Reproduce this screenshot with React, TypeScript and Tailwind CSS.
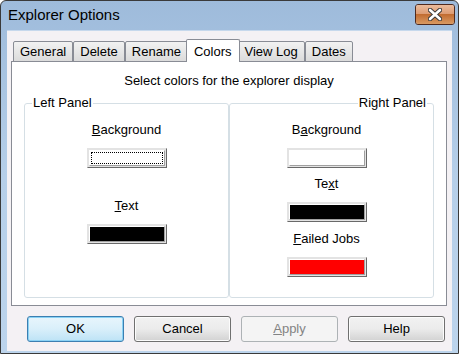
import React from "react";

const F = { fontFamily: '"Liberation Sans", Arial, sans-serif' } as const;

function ColorBtn({ color, focus }: { color: string; focus?: boolean }) {
  return (
    <div className="w-[80px] h-[20px] border border-t-[#e3e3e3] border-l-[#e3e3e3] border-r-[#696969] border-b-[#696969] bg-[#e3e3e3] p-[1px]">
      <div className="w-full h-full border border-t-white border-l-white border-r-[#a0a0a0] border-b-[#a0a0a0] p-[1px]" style={{ background: color }}>
        {focus && <div className="w-full h-full border border-dotted border-black" />}
      </div>
    </div>
  );
}

function Tab({ label, selected }: { label: string; selected?: boolean }) {
  if (selected) {
    return (
      <div className="relative z-10 h-[23px] -mx-[2px] px-[7px] bg-white border border-[#898c95] border-b-0 rounded-t-[2px] flex items-start pt-[2px] text-[13px] text-black">
        {label}
      </div>
    );
  }
  return (
    <div className="h-[21px] px-[6px] border border-[#898c95] rounded-t-[2px] bg-gradient-to-b from-[#f2f2f2] to-[#dbdbdb] flex items-center text-[13px] text-black">
      {label}
    </div>
  );
}

function Btn({ children, kind }: { children: React.ReactNode; kind?: "default" | "disabled" }) {
  const base = "w-[97px] h-[26px] rounded-[3px] border flex items-center justify-center text-[13px]";
  if (kind === "default")
    return (
      <div className={`${base} border-[#3c7fb1] bg-gradient-to-b from-[#e8f5fc] via-[#d9effa] to-[#bde3f6] text-black shadow-[inset_0_0_0_1px_#8ad2f5]`}>
        {children}
      </div>
    );
  if (kind === "disabled")
    return <div className={`${base} border-[#adb2b5] bg-[#f4f4f4] text-[#838383]`}>{children}</div>;
  return (
    <div className={`${base} border-[#707070] bg-gradient-to-b from-[#f2f2f2] via-[#ebebeb] to-[#d2d2d2] text-black shadow-[inset_0_0_0_1px_#fcfcfc]`}>
      {children}
    </div>
  );
}

export default function App() {
  return (
    <div style={F} className="w-[459px] h-[354px] border border-[#3a3a3a] rounded-t-[6px] bg-gradient-to-b from-[#9ebbdb] via-[#b6cfe9] to-[#bcd4ec] flex flex-col overflow-hidden">
      <div className="h-[29px] flex items-center pl-[7px] pr-[3px] shrink-0">
        <span className="text-[15px] text-black">Explorer Options</span>
        <div className="relative ml-auto mt-[-3px] w-[40px] h-[21px] rounded-[3px] border border-[#4f2a1e] overflow-hidden flex flex-col">
          <div className="h-1/2 bg-gradient-to-b from-[#ebbc9c] to-[#dc9b73]" />
          <div className="h-1/2 bg-gradient-to-b from-[#c06a2e] to-[#d99a62]" />
          <svg className="absolute left-[12px] top-[3px]" width="14" height="13" viewBox="0 0 14 13">
            <path d="M2 2 L12 11 M12 2 L2 11" stroke="#3a3a3a" strokeWidth="4.5" strokeLinecap="round" />
            <path d="M2 2 L12 11 M12 2 L2 11" stroke="#ffffff" strokeWidth="2.6" strokeLinecap="round" />
          </svg>
        </div>
      </div>
      <div className="flex-1 mx-[6px] mb-[2px] bg-[#f4f1f4] border-t border-[#c6d8ec] flex flex-col">
        <div className="ml-[4px] mt-[8px] w-[436px]">
          <div className="flex items-end ml-[2px] h-[23px] -mb-[1px]">
            <Tab label="General" />
            <Tab label="Delete" />
            <Tab label="Rename" />
            <Tab label="Colors" selected />
            <Tab label="View Log" />
            <Tab label="Dates" />
          </div>
          <div className="h-[245px] bg-white border border-[#898c95] flex flex-col">
            <div className="mt-[11px] h-[16px] text-[13px] text-center leading-[16px]">
              Select colors for the explorer display
            </div>
            <div className="flex mt-[6px] ml-[12px]">
              <fieldset className="w-[205px] h-[203px] border border-[#d5dfe5] rounded-[3px]">
                <legend className="ml-[7px] px-[1px] text-[13px] leading-[16px]">Left Panel</legend>
                <div className="flex flex-col items-center">
                  <div className="mt-[11px] text-[13px] leading-[16px]">
                    <u>B</u>ackground
                  </div>
                  <div className="mt-[10px]">
                    <ColorBtn color="#ffffff" focus />
                  </div>
                  <div className="mt-[30px] text-[13px] leading-[16px]">
                    <u>T</u>ext
                  </div>
                  <div className="mt-[10px]">
                    <ColorBtn color="#000000" />
                  </div>
                </div>
              </fieldset>
              <fieldset className="w-[205px] h-[203px] border border-[#d5dfe5] rounded-[3px]">
                <legend className="ml-auto mr-[6px] px-[1px] text-[13px] leading-[16px]">Right Panel</legend>
                <div className="flex flex-col items-center pr-[10px]">
                  <div className="mt-[11px] text-[13px] leading-[16px]">
                    B<u>a</u>ckground
                  </div>
                  <div className="mt-[10px]">
                    <ColorBtn color="#ffffff" />
                  </div>
                  <div className="mt-[8px] text-[13px] leading-[16px]">
                    Te<u>x</u>t
                  </div>
                  <div className="mt-[10px]">
                    <ColorBtn color="#000000" />
                  </div>
                  <div className="mt-[9px] text-[13px] leading-[16px]">
                    <u>F</u>ailed Jobs
                  </div>
                  <div className="mt-[10px]">
                    <ColorBtn color="#ff0000" />
                  </div>
                </div>
              </fieldset>
            </div>
          </div>
        </div>
        <div className="flex gap-[10px] ml-[20px] mt-[10px]">
          <Btn kind="default">OK</Btn>
          <Btn>Cancel</Btn>
          <Btn kind="disabled">
            <span>
              <u>A</u>pply
            </span>
          </Btn>
          <Btn>Help</Btn>
        </div>
      </div>
    </div>
  );
}
